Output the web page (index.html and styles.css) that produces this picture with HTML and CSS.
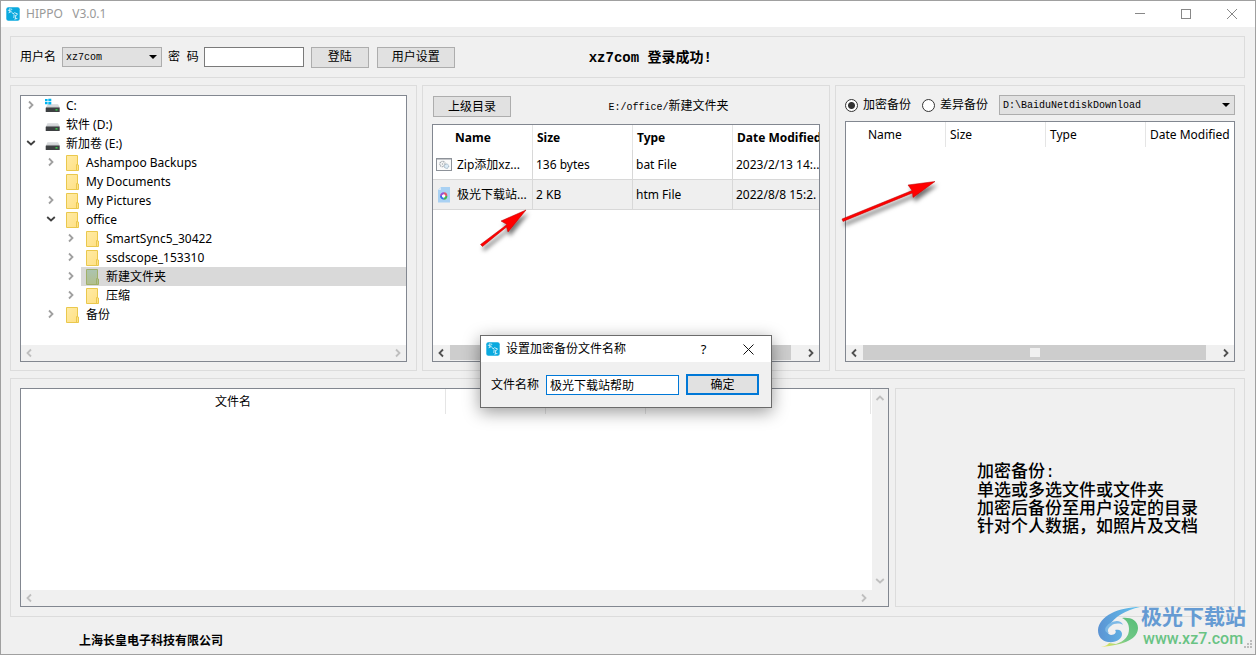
FILE: index.html
```html
<!DOCTYPE html>
<html lang="zh-CN">
<head>
<meta charset="utf-8">
<title>HIPPO V3.0.1</title>
<link rel="stylesheet" href="styles.css">
</head>
<body>
<svg class="defs" aria-hidden="true">
  <defs>
    <linearGradient id="g-folder" x1="0" y1="0" x2="1" y2="1"><stop offset="0" stop-color="#ffeba5"/><stop offset="1" stop-color="#ffe084"/></linearGradient>
    <linearGradient id="g-folder-sel" x1="0" y1="0" x2="0" y2="1"><stop offset="0" stop-color="#abc4b0"/><stop offset="1" stop-color="#b2bf8e"/></linearGradient>
    <linearGradient id="g-top" x1="0" y1="0" x2="0" y2="1"><stop offset="0" stop-color="#e3e5e7"/><stop offset="1" stop-color="#c4c7ca"/></linearGradient>
    <linearGradient id="g-swirl" x1="0" y1="0" x2="1" y2="0"><stop offset="0" stop-color="#5b93d3"/><stop offset="1" stop-color="#62c4ee"/></linearGradient>
    <linearGradient id="g-leaf" x1="1" y1="0" x2="0" y2="1"><stop offset="0" stop-color="#57bd78"/><stop offset=".55" stop-color="#74c987"/><stop offset="1" stop-color="#f3ea5c"/></linearGradient>
    <filter id="shade" x="-30%" y="-30%" width="160%" height="180%"><feDropShadow dx="2" dy="4" stdDeviation="2" flood-color="#000" flood-opacity=".55"/></filter>
  </defs>
  <symbol id="app" viewBox="0 0 14 14">
    <rect x=".3" y=".3" width="13.4" height="13.4" rx="2" fill="#0aa9de"/>
    <path d="M1.800 3.200l2.600.3M3.800 1.200v4.300M2.600 5.800l3-1.600M4.600 2l1.600.4M5.500 5.200l1.800 1.600M7 7l1.500-1.400M8.600 5.800l2.800 1-1 1.800M8.200 7.400l-.4 3.600M9.700 8l-.2 3.800M8.400 12.200l3-.8" stroke="#d9f4fd" stroke-width=".9" fill="none"/>
  </symbol>
  <symbol id="folder" viewBox="0 0 16 16">
    <path d="M1.500.5h11v9.500h1v5.500h-12z" fill="url(#g-folder)" stroke="#eac84d"/>
    <path d="M11.500 15.500v-6h1" fill="none" stroke="#eac84d"/>
  </symbol>
  <symbol id="folder-sel" viewBox="0 0 16 16">
    <path d="M1.500.5h11v9.500h1v5.500h-12z" fill="url(#g-folder-sel)" stroke="#a0b069"/>
    <path d="M11.500 15.500v-6h1" fill="none" stroke="#a0b069"/>
  </symbol>
  <symbol id="drive" viewBox="0 0 16 16">
    <path d="M2.500 6h10.500l2 4H.800z" fill="url(#g-top)"/>
    <rect x=".7" y="9.500" width="14" height="4.500" rx=".5" fill="#3d4042"/>
    <rect x="10.500" y="11.200" width="2" height="1.300" fill="#35e04a"/>
  </symbol>
  <symbol id="drive-win" viewBox="0 0 16 16">
    <use href="#drive" width="16" height="16"/>
    <path d="M0 1h2.600v2.300H0zM3.300.7h3v2.600h-3zM0 4h2.600v2.300H0zM3.300 4h3v2.600h-3z" fill="#00b4f0"/>
  </symbol>
  <symbol id="right" viewBox="0 0 8 10"><path d="M2 1.500L5.500 5 2 8.500" fill="none" stroke="currentColor" stroke-width="1.800"/></symbol>
  <symbol id="left" viewBox="0 0 8 10"><path d="M6 1.500L2.500 5 6 8.500" fill="none" stroke="currentColor" stroke-width="1.800"/></symbol>
  <symbol id="down" viewBox="0 0 10 8"><path d="M1.200 2L5 5.500 8.800 2" fill="none" stroke="currentColor" stroke-width="1.800"/></symbol>
  <symbol id="up" viewBox="0 0 10 8"><path d="M1.500 6L5 2.500 8.500 6" fill="none" stroke="currentColor" stroke-width="1.800"/></symbol>
  <symbol id="drop" viewBox="0 0 8 4"><path d="M0 0h8L4 4z" fill="currentColor"/></symbol>
</svg>

<div class="window">
  <header class="titlebar">
    <svg class="app-icon"><use href="#app"/></svg>
    <h1 class="title">HIPPO&nbsp;&nbsp; V3.0.1</h1>
    <div class="caption-buttons">
      <button type="button" aria-label="最小化"><svg width="10" height="10"><path d="M0 4.500h10" stroke="#888"/></svg></button>
      <button type="button" aria-label="最大化"><svg width="10" height="10"><rect x=".5" y=".5" width="9" height="9" fill="none" stroke="#888"/></svg></button>
      <button type="button" aria-label="关闭"><svg width="10" height="10"><path d="M0 0l10 10M10 0L0 10" stroke="#888"/></svg></button>
    </div>
  </header>

  <main class="content">
    <form class="panel login">
      <label for="user">用户名</label>
      <span class="combo combo-user"><select id="user"><option>xz7com</option></select><svg><use href="#drop"/></svg></span>
      <label class="spaced" for="pwd">密&nbsp; 码</label>
      <input class="field" id="pwd" type="password">
      <button class="btn btn-login" type="button">登陆</button>
      <button class="btn btn-wide" type="button">用户设置</button>
      <p class="status"><span class="mono">xz7com </span>登录成功<span class="mono">!</span></p>
    </form>

    <div class="columns">
      <section class="panel">
        <div class="box">
          <ul class="tree">
            <li class="l0"><button class="twist" type="button" aria-label="展开"><svg class="cv"><use href="#right"/></svg></button><span class="item"><svg class="ic"><use href="#drive-win"/></svg>C:</span></li>
            <li class="l0"><span class="twist"></span><span class="item"><svg class="ic"><use href="#drive"/></svg>软件 (D:)</span></li>
            <li class="l0"><button class="twist open" type="button" aria-label="折叠"><svg class="ch"><use href="#down"/></svg></button><span class="item"><svg class="ic"><use href="#drive"/></svg>新加卷 (E:)</span></li>
            <li class="l1"><button class="twist" type="button" aria-label="展开"><svg class="cv"><use href="#right"/></svg></button><span class="item"><svg class="ic"><use href="#folder"/></svg>Ashampoo Backups</span></li>
            <li class="l1"><span class="twist"></span><span class="item"><svg class="ic"><use href="#folder"/></svg>My Documents</span></li>
            <li class="l1"><button class="twist" type="button" aria-label="展开"><svg class="cv"><use href="#right"/></svg></button><span class="item"><svg class="ic"><use href="#folder"/></svg>My Pictures</span></li>
            <li class="l1"><button class="twist open" type="button" aria-label="折叠"><svg class="ch"><use href="#down"/></svg></button><span class="item"><svg class="ic"><use href="#folder"/></svg>office</span></li>
            <li class="l2"><button class="twist" type="button" aria-label="展开"><svg class="cv"><use href="#right"/></svg></button><span class="item"><svg class="ic"><use href="#folder"/></svg>SmartSync5_30422</span></li>
            <li class="l2"><button class="twist" type="button" aria-label="展开"><svg class="cv"><use href="#right"/></svg></button><span class="item"><svg class="ic"><use href="#folder"/></svg>ssdscope_153310</span></li>
            <li class="l2"><button class="twist" type="button" aria-label="展开"><svg class="cv"><use href="#right"/></svg></button><span class="item selected"><svg class="ic"><use href="#folder-sel"/></svg>新建文件夹</span></li>
            <li class="l2"><button class="twist" type="button" aria-label="展开"><svg class="cv"><use href="#right"/></svg></button><span class="item"><svg class="ic"><use href="#folder"/></svg>压缩</span></li>
            <li class="l1"><button class="twist" type="button" aria-label="展开"><svg class="cv"><use href="#right"/></svg></button><span class="item"><svg class="ic"><use href="#folder"/></svg>备份</span></li>
          </ul>
          <div class="hscroll off"><svg class="cv"><use href="#left"/></svg><span class="track"></span><svg class="cv"><use href="#right"/></svg></div>
        </div>
      </section>

      <section class="panel">
        <div class="pathbar">
          <button class="btn btn-wide" type="button">上级目录</button>
          <p class="path"><span class="mono">E:/office/</span>新建文件夹</p>
        </div>
        <div class="box">
          <table class="files bold-head">
            <thead><tr><th>Name</th><th>Size</th><th>Type</th><th>Date Modified</th></tr></thead>
            <tbody>
              <tr>
                <td><span class="file"><svg class="ic" viewBox="0 0 16 16"><rect x=".5" y="1.500" width="15" height="12" fill="#fafafa" stroke="#8d9299"/><path d="M0 2h16" stroke="#8d9299"/><circle cx="6.500" cy="7" r="2.600" fill="none" stroke="#a4aab0" stroke-width="1.400" stroke-dasharray="1.200 .6"/><circle cx="6.500" cy="7" r=".8" fill="#a4aab0"/><circle cx="10.500" cy="9.200" r="2.200" fill="#dbeaf5" stroke="#94a9b9" stroke-dasharray="1 .5"/></svg>Zip添加xz...</span></td>
                <td>136 bytes</td><td>bat File</td><td>2023/2/13 14:..</td>
              </tr>
              <tr class="alt">
                <td><span class="file"><svg class="ic" viewBox="0 0 16 16"><path d="M2 3l3-3h9v15.500H2z" fill="#a9d1f3"/><path d="M2 3l3-3v3z" fill="#d5eafa"/><circle cx="7.700" cy="9" r="2" fill="#fff"/><g fill="none" stroke-width="1.900"><path d="M5 9a2.700 2.700 0 0 1 3-2.700" stroke="#9b4fd0"/><path d="M8 6.300a2.700 2.700 0 0 1 2.400 2.700" stroke="#e5546a"/><path d="M10.400 9a2.700 2.700 0 0 1-2.700 2.700" stroke="#43b649"/><path d="M7.700 11.700A2.700 2.700 0 0 1 5 9" stroke="#2f6fe4"/></g></svg>极光下载站...</span></td>
                <td>2 KB</td><td>htm File</td><td>2022/8/8 15:2.</td>
              </tr>
            </tbody>
          </table>
          <div class="hscroll"><svg class="cv"><use href="#left"/></svg><span class="track"><span class="thumb"></span></span><svg class="cv"><use href="#right"/></svg></div>
        </div>
        <svg class="pointer pointer-file" viewBox="0 0 50 40"><path d="M1.500 37.500L28 17.500 22 14 47 3 29 25 27.500 20 3.500 39.500z" fill="#f00" stroke="#b00000" stroke-width=".5" filter="url(#shade)"/></svg>
      </section>

      <section class="panel">
        <div class="modebar">
          <label class="radio"><input type="radio" name="mode" checked>加密备份</label>
          <label class="radio"><input type="radio" name="mode">差异备份</label>
          <span class="combo combo-path"><select aria-label="备份路径"><option>D:\BaiduNetdiskDownload</option></select><svg><use href="#drop"/></svg></span>
        </div>
        <div class="box">
          <table class="files">
            <thead><tr><th>Name</th><th>Size</th><th>Type</th><th>Date Modified</th></tr></thead>
          </table>
          <div class="hscroll"><svg class="cv"><use href="#left"/></svg><span class="track"><span class="thumb"><i></i></span></span><svg class="cv"><use href="#right"/></svg></div>
        </div>
        <svg class="pointer pointer-target" viewBox="0 0 100 45"><path d="M2 40L72 11.500 68 6 95 2.500 73 18.500 72.500 14 3 42.500z" fill="#f00" stroke="#b00000" stroke-width=".5" filter="url(#shade)"/></svg>
      </section>
    </div>

    <section class="panel bottom">
      <div class="box">
        <div class="queue-view">
          <table class="queue-table"><thead><tr><th class="q-name">文件名</th><th class="q-col"></th><th class="q-col"></th><th></th></tr></thead></table>
          <div class="vscroll"><svg class="ch"><use href="#up"/></svg><svg class="ch"><use href="#down"/></svg></div>
        </div>
        <div class="hscroll off queue-scroll"><svg class="cv"><use href="#left"/></svg><span class="track"></span><svg class="cv"><use href="#right"/></svg></div>
      </div>
      <aside class="note">
        <p>加密备份<span class="mono">:</span><br>单选或多选文件或文件夹<br>加密后备份至用户设定的目录<br>针对个人数据，如照片及文档</p>
      </aside>
    </section>
  </main>

  <footer class="footer">上海长皇电子科技有限公司</footer>

  <div class="dialog" role="dialog" aria-labelledby="dlg-title">
    <div class="dialog-title">
      <svg class="app-icon"><use href="#app"/></svg>
      <h2 id="dlg-title">设置加密备份文件名称</h2>
      <button type="button" aria-label="帮助">?</button>
      <button type="button" aria-label="关闭"><svg width="11" height="11"><path d="M.5.5l10 10M10.500.5l-10 10" stroke="#111"/></svg></button>
    </div>
    <form class="dialog-body">
      <label for="fname">文件名称</label>
      <input class="field focus" id="fname" type="text" value="极光下载站帮助">
      <button class="btn primary" type="button">确定</button>
    </form>
  </div>

  <div class="watermark">
    <svg viewBox="0 0 44 42"><path d="M43 1C22 1 2 10 1 24c0 7 4 11 10 12 8 1 14-3 14-8 0-4-4-5-7-4 2 2 0 5-4 5-4-1-5-5-2-9C17 11 29 4 43 1z" fill="url(#g-swirl)"/><path d="M9 21c5-7 15-8 17-2-3-2-9-2-12 1-3 2-4 5-2 7-3 0-5-3-3-6z" fill="#7db9e6"/><path d="M25 12c8-1 16 2 16 10 0 10-12 17-37 19 4-1 7-2 8-4l7 1c9-3 13-8 13-15 0-6-3-9-7-11z" fill="url(#g-leaf)"/></svg>
    <div><strong>极光下载站</strong><span>www.xz7.com</span></div>
  </div>
  <svg class="grip" viewBox="0 0 9 9"><path d="M6 0h2v2H6zM3 3h2v2H3zM6 3h2v2H6zM0 6h2v2H0zM3 6h2v2H3zM6 6h2v2H6z" fill="#bcbcbc"/></svg>
</div>
</body>
</html>
```
FILE: styles.css
```css
* { box-sizing: border-box; }

body {
  margin: 0;
  font: 12px/16px "Liberation Sans", "Noto Sans CJK SC", sans-serif;
  color: #000;
}

h1, h2, p, ul { margin: 0; padding: 0; }
svg { display: block; flex: none; }
button, input, select { font: inherit; color: inherit; margin: 0; }
button { padding: 0; }
.defs { position: absolute; width: 0; height: 0; }
.mono { font-family: "Liberation Mono", monospace; font-size: 10px; }

.window {
  position: relative;
  display: flex;
  flex-direction: column;
  min-height: 100vh;
  background: #f0f0f0;
  border: 1px solid #a0a0a0;
  overflow: hidden;
}

.titlebar {
  display: flex;
  align-items: center;
  height: 26px;
  padding-left: 5px;
  background: #fff;
}
.app-icon { width: 14px; height: 14px; }
.title {
  flex: 1;
  padding-left: 6px;
  font: 12px/16px "Noto Sans", sans-serif;
  color: #999;
}
.caption-buttons { display: flex; }
.caption-buttons button {
  display: grid;
  place-items: center;
  width: 46px;
  height: 24px;
  border: 0;
  background: none;
}

.content {
  flex: 1;
  display: grid;
  grid-template-rows: auto 286fr 239fr;
  gap: 7px;
  padding: 9px 10px 0 9px;
}

.panel {
  position: relative;
  border: 1px solid #dcdcdc;
  padding: 9px;
  min-width: 0;
}
.box {
  border: 1px solid #828790;
  background: #fff;
  display: flex;
  flex-direction: column;
  flex: 1;
  min-width: 0;
  overflow: hidden;
}

.login { display: flex; align-items: center; height: 42px; }
.combo { display: grid; align-items: center; height: 20px; }
.combo select {
  grid-area: 1 / 1;
  appearance: none;
  width: 100%;
  height: 20px;
  padding: 2px 3px 0;
  border: 1px solid #adadad;
  border-radius: 0;
  background: #e1e1e1;
  font: 10px/16px "Liberation Mono", monospace;
}
.combo svg {
  grid-area: 1 / 1;
  justify-self: end;
  width: 8px;
  height: 4px;
  margin-right: 5px;
  pointer-events: none;
}
.combo-user { width: 100px; margin-left: 6px; }
.spaced { margin: 0 5px 0 6px; white-space: nowrap; }
.field {
  width: 100px;
  height: 20px;
  padding: 0 3px;
  border: 1px solid #7a7a7a;
  background: #fff;
  outline: 0;
}
.btn {
  height: 21px;
  border: 1px solid #adadad;
  background: #e1e1e1;
}
.btn-login { width: 58px; margin: 0 8px 0 7px; }
.btn-wide { width: 78px; }
.status { margin-left: 134px; font-size: 14px; font-weight: bold; white-space: nowrap; }
.status .mono { font-size: 14px; }

.columns {
  display: grid;
  grid-template-columns: 407fr 408fr 410fr;
  gap: 5px;
}
.columns .panel { display: flex; flex-direction: column; padding-bottom: 8px; }

.tree {
  flex: 1;
  list-style: none;
  font: 12px/19px "Noto Sans", "Noto Sans CJK SC", sans-serif;
}
.tree li { display: flex; height: 19px; }
.l1 { padding-left: 20px; }
.l2 { padding-left: 40px; }
.twist {
  display: grid;
  place-items: center;
  width: 19px;
  height: 18px;
  margin-right: 1px;
  border: 0;
  background: none;
  color: #a0a0a0;
}
.open { color: #404040; }
.cv { width: 8px; height: 10px; }
.ch { width: 10px; height: 8px; }
.item { flex: 1; display: flex; align-items: center; gap: 5px; padding-left: 4px; }
.ic { width: 16px; height: 16px; }
.selected { background: #d9d9d9; }

.hscroll {
  display: flex;
  align-items: center;
  height: 16px;
  padding: 0 4px;
  background: #f0f0f0;
  color: #505050;
}
.off { color: #bfbfbf; }
.track { flex: 1; height: 15px; margin: 0 5px; align-self: flex-start; }
.thumb {
  display: grid;
  place-items: center;
  width: 97%;
  height: 15px;
  background: #cdcdcd;
}
.thumb i { width: 10px; height: 9px; background: #f0f0f0; }

.pathbar { display: flex; align-items: center; height: 21px; margin: 1px 0 7px 1px; }
.path { flex: 1; padding-left: 6px; text-align: center; }

.files {
  width: 400px;
  margin-bottom: auto;
  table-layout: fixed;
  border-collapse: separate;
  border-spacing: 0;
  font: 12px/16px "Noto Sans", "Noto Sans CJK SC", sans-serif;
}
.files th {
  height: 25px;
  padding: 0 4px;
  border-right: 1px solid #e5e5e5;
  text-align: left;
  font-weight: normal;
  white-space: nowrap;
}
.files th:first-child { padding-left: 22px; }
.bold-head th { font-weight: bold; }
.files td {
  height: 30px;
  padding: 0 3px;
  border-right: 1px solid #d8d8d8;
  border-bottom: 1px solid #d8d8d8;
  white-space: nowrap;
}
.alt td { background: #efefef; }
.file { display: flex; align-items: center; gap: 5px; }

.modebar { display: flex; align-items: center; height: 20px; margin-bottom: 6px; }
.radio { display: flex; align-items: center; gap: 5px; margin-right: 11px; white-space: nowrap; }
.radio input {
  appearance: none;
  width: 13px;
  height: 13px;
  border: 1px solid #333;
  border-radius: 50%;
  background: #fff;
}
.radio input:checked { background: radial-gradient(circle, #333 3px, #fff 4px); }
.combo-path { flex: 1; }

.pointer { position: absolute; overflow: visible; pointer-events: none; }
.pointer-file { left: 56px; top: 121px; width: 50px; height: 40px; }
.pointer-target { left: 4px; top: 93px; width: 100px; height: 45px; }

.bottom {
  display: grid;
  grid-template-columns: 869fr 340fr;
  gap: 6px;
}
.queue-view { flex: 1; display: flex; }
.queue-table {
  flex: 1;
  width: 100%;
  margin-bottom: auto;
  table-layout: fixed;
  border-spacing: 0;
}
.queue-table th {
  height: 25px;
  padding: 0;
  border-right: 1px solid #e5e5e5;
  font-weight: normal;
}
.queue-table .q-name { width: 50%; }
.queue-table .q-col { width: 100px; }
.vscroll {
  display: flex;
  flex-direction: column;
  justify-content: space-between;
  width: 16px;
  margin-left: 1px;
  padding: 5px 3px;
  background: #f0f0f0;
  color: #bfbfbf;
}
.queue-scroll { padding-right: 20px; }
.note {
  display: flex;
  align-items: center;
  border: 1px solid #dcdcdc;
  padding: 4px 0 0 81px;
  font-size: 17px;
  line-height: 18px;
  font-weight: 500;
  white-space: nowrap;
}
.note .mono { font-size: 17px; }

.footer {
  height: 37px;
  padding: 16px 0 0 78px;
  font-weight: bold;
}

.dialog {
  position: absolute;
  left: calc(50% - 148px);
  top: 334px;
  width: 292px;
  border: 1px solid #6b6b6b;
  background: #f0f0f0;
  box-shadow: 0 4px 16px rgba(0, 0, 0, .4);
}
.dialog-title { display: flex; align-items: center; height: 26px; padding-left: 5px; background: #fff; }
.dialog-title h2 { flex: 1; padding-left: 6px; font-size: 12px; font-weight: normal; }
.dialog-title button {
  display: grid;
  place-items: center;
  width: 45px;
  height: 24px;
  border: 0;
  background: none;
  font: 13px/16px "Noto Sans", sans-serif;
}
.dialog-body { display: flex; align-items: center; height: 45px; padding: 0 12px 0 10px; }
.dialog-body .field { flex: 1; min-width: 0; margin: 0 7px; }
.focus { border-color: #0078d7; }
.primary { width: 73px; border: 2px solid #0078d7; }

.watermark {
  position: absolute;
  right: 9px;
  bottom: 5px;
  display: flex;
  align-items: center;
  pointer-events: none;
}
.watermark svg { width: 44px; height: 42px; }
.watermark strong, .watermark span { display: block; }
.watermark strong { font-size: 21px; line-height: 24px; color: #659bd3; }
.watermark span { padding-left: 2px; font: 500 16px/20px Roboto, sans-serif; color: #69c384; }
.grip { position: absolute; right: 2px; bottom: 5px; width: 9px; height: 9px; }
```
